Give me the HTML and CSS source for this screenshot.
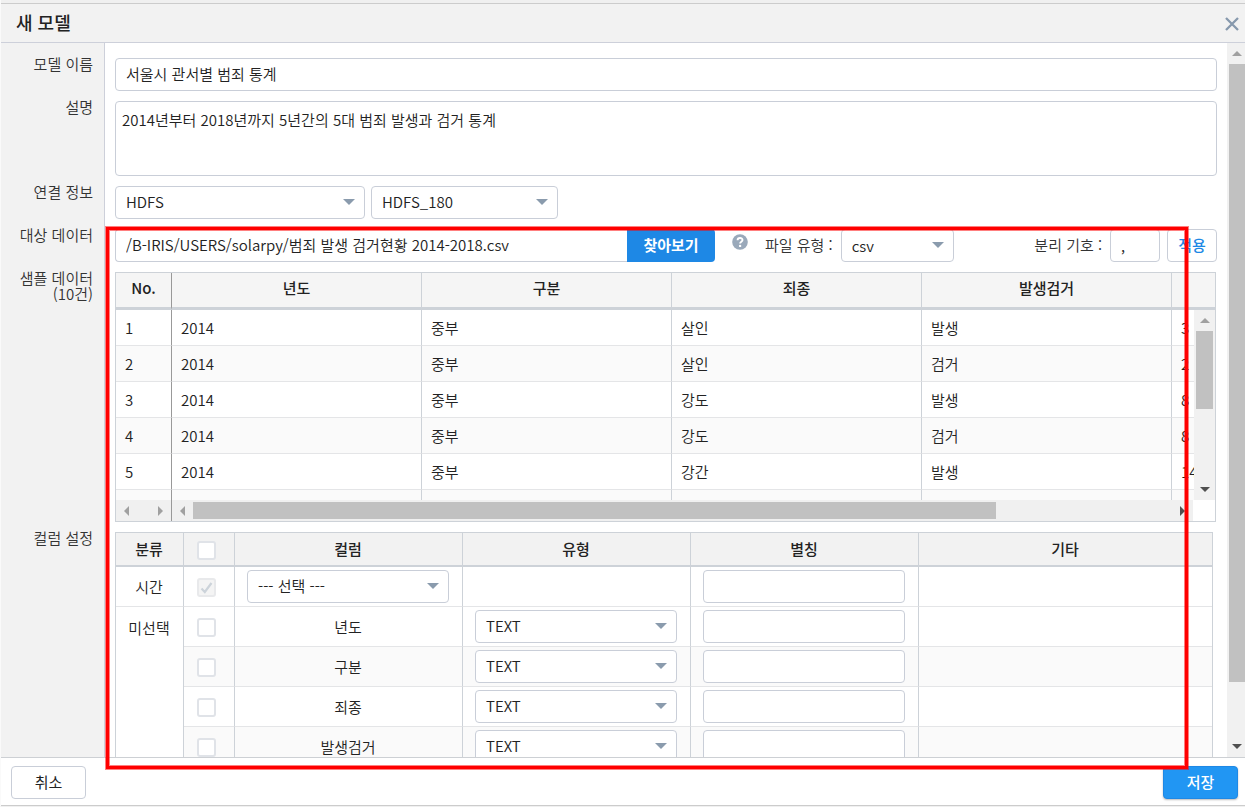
FILE: index.html
```html
<!DOCTYPE html>
<html lang="ko">
<head>
<meta charset="utf-8">
<title>새 모델</title>
<link rel="stylesheet" href="styles.css">
</head>
<body>
<section class="dialog" role="dialog" aria-labelledby="title">
  <header class="dialog-head">
    <h1 id="title">새 모델</h1>
    <button class="close" type="button" aria-label="닫기"><svg width="14" height="14" viewBox="0 0 14 14"><path d="M1 1 13 13M13 1 1 13" stroke="#8799ad" stroke-width="2.3" fill="none"/></svg></button>
  </header>

  <main class="dialog-body">
    <form class="form">
      <label class="label" for="name">모델 이름</label>
      <input class="field" id="name" type="text" value="서울시 관서별 범죄 통계">

      <label class="label" for="desc">설명</label>
      <textarea class="field area" id="desc">2014년부터 2018년까지 5년간의 5대 범죄 발생과 검거 통계</textarea>

      <label class="label" for="conn">연결 정보</label>
      <div class="line">
        <select class="field conn-type" id="conn"><option>HDFS</option></select>
        <select class="field conn-name" aria-label="연결 이름"><option>HDFS_180</option></select>
      </div>

      <label class="label" for="path">대상 데이터</label>
      <div class="line target">
        <input class="field path" id="path" type="text" value="/B-IRIS/USERS/solarpy/범죄 발생 검거현황 2014-2018.csv">
        <button class="browse" type="button">찾아보기</button>
        <svg class="help" width="16" height="16" viewBox="0 0 16 16"><circle cx="8" cy="8" r="7.8" fill="#9aa9ba"/><path d="M5.6 6.3C5.6 3.3 10.5 3.3 10.5 6.1C10.5 7.8 8.1 7.7 8.1 9.6" stroke="#fff" stroke-width="1.9" fill="none"/><circle cx="8.1" cy="11.9" r="1.2" fill="#fff"/></svg>
        <label class="caption" for="ftype">파일 유형 :</label>
        <select class="field ftype" id="ftype"><option>csv</option></select>
        <label class="caption sep-caption" for="sep">분리 기호 :</label>
        <input class="field sep" id="sep" type="text" value=",">
        <button class="apply" type="button">적용</button>
      </div>

      <span class="label">샘플 데이터<br>(10건)</span>
      <div class="sample">
        <div class="sample-view">
          <table class="sample-table">
            <colgroup><col class="c-no"><col class="c-data"><col class="c-data"><col class="c-data"><col class="c-data"><col></colgroup>
            <thead><tr><th>No.</th><th>년도</th><th>구분</th><th>죄종</th><th>발생검거</th><th></th></tr></thead>
            <tbody>
              <tr><td>1</td><td>2014</td><td>중부</td><td>살인</td><td>발생</td><td>3</td></tr>
              <tr><td>2</td><td>2014</td><td>중부</td><td>살인</td><td>검거</td><td>2</td></tr>
              <tr><td>3</td><td>2014</td><td>중부</td><td>강도</td><td>발생</td><td>8</td></tr>
              <tr><td>4</td><td>2014</td><td>중부</td><td>강도</td><td>검거</td><td>8</td></tr>
              <tr><td>5</td><td>2014</td><td>중부</td><td>강간</td><td>발생</td><td>14</td></tr>
              <tr><td></td><td></td><td></td><td></td><td></td><td></td></tr>
            </tbody>
          </table>
          <div class="vbar inner"><i class="arrow up"></i><div class="track"><div class="thumb"></div></div><i class="arrow down"></i></div>
        </div>
        <div class="sample-foot">
          <div class="hbar fixed"><i class="arrow left"></i><i class="arrow right"></i></div>
          <div class="hbar wide"><i class="arrow left"></i><div class="track"><div class="thumb"></div></div><i class="arrow right dark"></i></div>
        </div>
      </div>

      <span class="label">컬럼 설정</span>
      <table class="cols">
        <colgroup><col class="k-kind"><col class="k-check"><col class="k-col"><col class="k-col"><col class="k-col"><col></colgroup>
        <thead><tr><th>분류</th><th><input type="checkbox" aria-label="전체 선택"></th><th>컬럼</th><th>유형</th><th>별칭</th><th>기타</th></tr></thead>
        <tbody>
          <tr><td>시간</td><td><input type="checkbox" checked disabled aria-label="시간"></td><td><select class="field" aria-label="시간 컬럼"><option>--- 선택 ---</option></select></td><td></td><td><input class="field" type="text" aria-label="시간 별칭"></td><td></td></tr>
          <tr><td class="kind" rowspan="4">미선택</td><td><input type="checkbox" aria-label="년도"></td><td>년도</td><td><select class="field" aria-label="년도 유형"><option>TEXT</option></select></td><td><input class="field" type="text" aria-label="년도 별칭"></td><td></td></tr>
          <tr class="alt"><td><input type="checkbox" aria-label="구분"></td><td>구분</td><td><select class="field" aria-label="구분 유형"><option>TEXT</option></select></td><td><input class="field" type="text" aria-label="구분 별칭"></td><td></td></tr>
          <tr><td><input type="checkbox" aria-label="죄종"></td><td>죄종</td><td><select class="field" aria-label="죄종 유형"><option>TEXT</option></select></td><td><input class="field" type="text" aria-label="죄종 별칭"></td><td></td></tr>
          <tr class="alt"><td><input type="checkbox" aria-label="발생검거"></td><td>발생검거</td><td><select class="field" aria-label="발생검거 유형"><option>TEXT</option></select></td><td><input class="field" type="text" aria-label="발생검거 별칭"></td><td></td></tr>
        </tbody>
      </table>
    </form>
    <div class="vbar outer"><i class="arrow up"></i><div class="track"><div class="thumb"></div></div><i class="arrow down"></i></div>
  </main>

  <footer class="dialog-foot">
    <button class="cancel" type="button">취소</button>
    <button class="save" type="button">저장</button>
  </footer>
  <div class="highlight"></div>
</section>
</body>
</html>
```
FILE: styles.css
```css
* { box-sizing: border-box; }

body {
  margin: 0;
  background: #f0f0f0;
  color: #222;
  font: 350 15px/22px "Noto Sans CJK KR", "Noto Sans", sans-serif;
}

input, select, textarea, button { font: inherit; color: inherit; margin: 0; }

.dialog {
  position: relative;
  display: flex;
  flex-direction: column;
  height: 100vh;
  padding-top: 3px;
  border-left: 1px solid #fafafa;
  border-bottom: 1px solid #f0f0f0;
}

.dialog-head {
  display: flex;
  flex: none;
  align-items: center;
  justify-content: space-between;
  height: 40px;
  padding: 0 6px 0 15px;
  background: #f2f2f2;
  border-top: 1px solid #ccc;
  border-bottom: 1px solid #cdd0da;
}
.dialog-head h1 { margin: 0; padding-bottom: 2px; font-size: 18px; font-weight: 500; line-height: 26px; color: #222; }
.close { display: flex; padding: 2px 0 0; border: 0; background: none; }

.dialog-body { display: flex; flex: 1; min-height: 0; background: #fff; }

.form {
  display: grid;
  flex: 1;
  min-width: 0;
  grid-template-columns: 104px minmax(0, 1fr);
  gap: 10px;
  align-content: start;
  padding: 15px 10px 0 0;
  overflow: hidden;
  background: linear-gradient(to right, #f2f2f2 103px, #cdd0da 103px, #cdd0da 104px, #fff 104px);
}

.label { margin-top: -2px; padding-right: 12px; line-height: 16px; text-align: right; color: #333; }

.field {
  display: block;
  width: 100%;
  height: 33px;
  padding: 0 10px 2px;
  border: 1px solid #c9ced8;
  border-radius: 4px;
  outline: 0;
  background: #fff;
}
select.field {
  appearance: none;
  background: #fff url("data:image/svg+xml,%3Csvg xmlns='http://www.w3.org/2000/svg' width='12' height='6'%3E%3Cpath d='M0 0h12L6 6z' fill='%238a9bad'/%3E%3C/svg%3E") no-repeat right 9px top 12px;
}
.field.area { height: 75px; padding: 7px 6px; resize: none; }

.line { display: flex; gap: 6px; }
.line .conn-type { width: 250px; }
.line .conn-name { width: 187px; }

.target { gap: 0; }
.line .path { flex: 0 1 512px; width: auto; min-width: 0; border-right: 0; border-radius: 4px 0 0 4px; }
.browse { flex: none; width: 88px; height: 33px; padding: 0 0 2px; border: 0; border-radius: 0 4px 4px 0; background: #1e88e5; color: #fff; font-weight: 700; }
.help { flex: none; margin: 5px 17px 0 17px; }
.caption { flex: none; margin-right: 8px; line-height: 32px; color: #333; }
.line .ftype { flex: none; width: 113px; padding-bottom: 0; }
.sep-caption { margin-left: auto; }
.line .sep { flex: none; width: 50px; margin-right: 7px; padding-bottom: 0; }
.apply { flex: none; width: 50px; height: 33px; padding: 0 0 2px; border: 1px solid #c9ced8; border-radius: 4px; background: #fff; color: #1e88e5; font-weight: 500; }

.sample { margin-right: 1px; border: 1px solid #cdd2d8; }
.sample-view { position: relative; height: 227px; overflow: hidden; }

table { width: 100%; table-layout: fixed; border-collapse: separate; border-spacing: 0; }
th { font-weight: 500; color: #222; }

.c-no { width: 56px; }
.c-data { width: 250px; }
.sample-table th { height: 37px; padding: 0 0 4px; background: #f5f5f5; border-right: 1px solid #cdd2d8; border-bottom: 3px solid #cdd2d8; }
.sample-table td { height: 36px; padding: 0 9px; border-right: 1px solid #cdd2d8; border-bottom: 1px solid #e4e5e7; }
.sample-table tr > :first-child { border-right-color: #999; }
.sample-table tr > :last-child { border-right: 0; }
.sample-table tbody tr:nth-child(even) { background: #fafafa; }

.arrow { flex: none; width: 21px; height: 21px; background: no-repeat center; }
.arrow.up { background-image: url("data:image/svg+xml,%3Csvg xmlns='http://www.w3.org/2000/svg' width='10' height='5'%3E%3Cpath d='M0 5h10L5 0z' fill='%23a0a0a0'/%3E%3C/svg%3E"); }
.arrow.down { background-image: url("data:image/svg+xml,%3Csvg xmlns='http://www.w3.org/2000/svg' width='10' height='5'%3E%3Cpath d='M0 0h10L5 5z' fill='%23505050'/%3E%3C/svg%3E"); }
.arrow.left { background-image: url("data:image/svg+xml,%3Csvg xmlns='http://www.w3.org/2000/svg' width='5' height='10'%3E%3Cpath d='M5 0v10L0 5z' fill='%23a0a0a0'/%3E%3C/svg%3E"); }
.arrow.right { background-image: url("data:image/svg+xml,%3Csvg xmlns='http://www.w3.org/2000/svg' width='5' height='10'%3E%3Cpath d='M0 0v10L5 5z' fill='%23a0a0a0'/%3E%3C/svg%3E"); }
.arrow.right.dark { background-image: url("data:image/svg+xml,%3Csvg xmlns='http://www.w3.org/2000/svg' width='5' height='10'%3E%3Cpath d='M0 0v10L5 5z' fill='%23505050'/%3E%3C/svg%3E"); }
.track { flex: 1; min-height: 0; min-width: 0; }
.thumb { background: #c1c1c1; }

.vbar { display: flex; flex-direction: column; background: #f1f1f1; }
.vbar.inner { position: absolute; top: 37px; right: 0; bottom: 0; width: 21px; }
.vbar.inner .thumb { width: 17px; height: 53%; margin: 0 auto; }
.vbar.outer { flex: none; width: 18px; }
.vbar.outer .arrow { width: 20px; }
.vbar.outer .thumb { height: 92%; margin-left: 2px; }

.sample-foot { display: flex; height: 21px; padding-right: 22px; }
.hbar { display: flex; background: #f0f0f0; }
.hbar.fixed { flex: none; justify-content: space-between; width: 56px; border-right: 1px solid #999; }
.hbar.wide { flex: 1; }
.hbar.wide .thumb { width: 82%; height: 17px; margin-top: 2px; }

.cols { width: auto; margin-right: 4px; border: 1px solid #cdd2d8; }
.k-kind { width: 68px; }
.k-check { width: 51px; }
.k-col { width: 228px; }
.cols th { height: 34px; padding: 0 13px 0 12px; background: #f2f2f2; border-right: 1px solid #cdd2d8; border-bottom: 2px solid #cdd2d8; }
.cols td { height: 40px; padding: 0 13px 0 12px; border-right: 1px solid #cdd2d8; border-bottom: 1px solid #e4e5e7; text-align: center; }
.cols tr > :last-child { border-right: 0; }
.cols .alt { background: #fafafa; }
.cols .kind { padding-top: 10px; vertical-align: top; background: #fff; }

input[type="checkbox"] {
  appearance: none;
  display: block;
  width: 19px;
  height: 19px;
  margin: 2px 0 0 1px;
  border: 2px solid #e0e3e8;
  border-radius: 3px;
  background: #fff;
}
input[type="checkbox"]:checked {
  border-color: #e8e9eb;
  background: #f4f4f4 url("data:image/svg+xml,%3Csvg xmlns='http://www.w3.org/2000/svg' width='13' height='13'%3E%3Cpath d='M1.5 7.5 4.8 11 11.5 2' stroke='%23ccd3da' stroke-width='2.2' fill='none'/%3E%3C/svg%3E") no-repeat center;
}

.dialog-foot {
  display: flex;
  flex: none;
  justify-content: space-between;
  height: 49px;
  padding: 8px 7px 0 10px;
  background: #fff;
  border-top: 1px solid #cdd0d4;
  border-bottom: 1px solid #ccc;
}
.cancel, .save { width: 75px; height: 33px; padding: 0 0 2px; border-radius: 4px; }
.cancel { border: 1px solid #c9ced8; background: #fff; font-weight: 400; }
.save { border: 1px solid #1e88e5; background: #2196f3; color: #fff; font-weight: 500; box-shadow: 0 1px 2px #bbb; }

.highlight {
  position: absolute;
  z-index: 2;
  top: 227px;
  right: 57px;
  bottom: 37px;
  left: 105px;
  border: 3px solid #f00;
  box-shadow: 0 0 0 1px rgba(255, 0, 0, .5), inset 0 0 0 1px rgba(255, 0, 0, .5);
  pointer-events: none;
}
```
